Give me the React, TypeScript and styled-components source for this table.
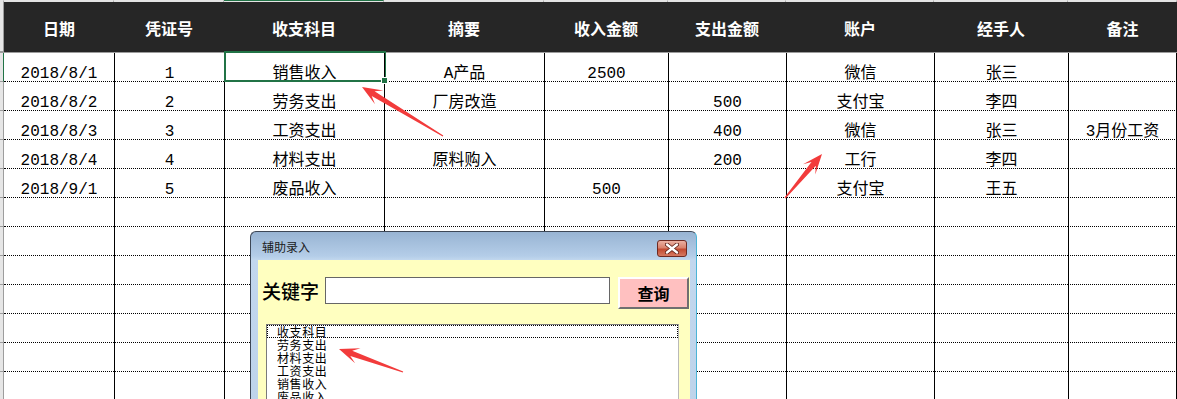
import styled, { createGlobalStyle, css } from "styled-components";

const GlobalStyle = createGlobalStyle`
  body {
    margin: 0;
    background: #ffffff;
    overflow: hidden;
  }
`;

const COLS = [110, 110, 160, 160, 124, 118, 148, 134, 109];
const TEMPLATE = `4px ${COLS.map((w) => `${w}px`).join(" ")}`;
const SELECTED_COL = 2;
const SELECTED_ROW = 0;

const HEADERS = ["日期", "凭证号", "收支科目", "摘要", "收入金额", "支出金额", "账户", "经手人", "备注"];

const ROWS: string[][] = [
  ["2018/8/1", "1", "销售收入", "A产品", "2500", "", "微信", "张三", ""],
  ["2018/8/2", "2", "劳务支出", "厂房改造", "", "500", "支付宝", "李四", ""],
  ["2018/8/3", "3", "工资支出", "", "", "400", "微信", "张三", "3月份工资"],
  ["2018/8/4", "4", "材料支出", "原料购入", "", "200", "工行", "李四", ""],
  ["2018/9/1", "5", "废品收入", "", "500", "", "支付宝", "王五", ""],
  ...Array.from({ length: 7 }, () => Array(9).fill("")),
];

const LIST_ITEMS = ["收支科目", "劳务支出", "材料支出", "工资支出", "销售收入", "废品收入"];

const Page = styled.div`
  position: relative;
  width: 1177px;
  height: 399px;
  overflow: hidden;
  font-family: "Liberation Mono", "Noto Sans CJK SC", monospace;
`;

const Sheet = styled.div`
  display: flex;
  flex-direction: column;
`;

const StripRow = styled.div`
  display: grid;
  grid-template-columns: ${TEMPLATE};
  height: 2px;
`;

const StripCell = styled.div<{ $active?: boolean }>`
  background: #e3e3e3;
  border-right: 1px solid #ababab;
  border-top: 1px solid ${(p) => (p.$active ? "#217346" : "#e3e3e3")};
  box-sizing: border-box;
`;

const HeaderRow = styled.div`
  display: grid;
  grid-template-columns: ${TEMPLATE};
  height: 51px;
  box-sizing: border-box;
  border-bottom: 1px solid #9c9c9c;
`;

const HeadCell = styled.div`
  background: #262626;
  color: #ffffff;
  font-family: "Noto Sans CJK SC", sans-serif;
  font-weight: 700;
  font-size: 16px;
  display: flex;
  align-items: center;
  justify-content: center;
  padding-top: 2px;
`;

const RowHead = styled.div<{ $active?: boolean }>`
  background: #e6e6e6;
  box-sizing: border-box;
  border-right: 1px solid ${(p) => (p.$active ? "#217346" : "#9d9d9d")};
  border-bottom: 1px solid #9d9d9d;
`;

const DataRow = styled.div`
  display: grid;
  grid-template-columns: ${TEMPLATE};
  height: 29px;
`;

const selectedFrame = css`
  &::after {
    content: "";
    position: absolute;
    left: -1px;
    top: -2px;
    right: -2px;
    bottom: -1px;
    border: 2px solid #217346;
    pointer-events: none;
  }
  &::before {
    content: "";
    position: absolute;
    right: -4px;
    bottom: -3px;
    width: 5px;
    height: 5px;
    background: #217346;
    border: 1px solid #ffffff;
    z-index: 2;
  }
`;

const Cell = styled.div<{ $first?: boolean; $last?: boolean; $selected?: boolean }>`
  position: relative;
  box-sizing: border-box;
  border-bottom: 1px dotted #000000;
  border-left: ${(p) => (p.$first ? "none" : "1px solid #000000")};
  border-right: ${(p) => (p.$last ? "1px solid #000000" : "none")};
  display: flex;
  align-items: flex-end;
  justify-content: center;
  font-size: 16px;
  line-height: 14px;
  color: #000000;
  white-space: nowrap;
  ${(p) => p.$selected && selectedFrame}
`;

const Window = styled.div`
  position: absolute;
  left: 250px;
  top: 231px;
  width: 447px;
  height: 190px;
  box-sizing: border-box;
  display: flex;
  flex-direction: column;
  padding: 0 6px 0 7px;
  border: 1px solid #3d4756;
  border-right-color: #4cb4d6;
  border-bottom: none;
  border-radius: 6px 6px 0 0;
  background: linear-gradient(#98b4d3 0px, #b4cde8 24px, #c2d7ee 28px, #bdd3ea 100%);
  z-index: 5;
`;

const TitleBar = styled.div`
  height: 28px;
  display: flex;
  align-items: flex-start;
  justify-content: space-between;
  padding: 0 3px 0 4px;
`;

const Title = styled.span`
  font-family: "Noto Sans CJK SC", sans-serif;
  font-size: 12px;
  line-height: 12px;
  margin-top: 9px;
  color: #1b1b1b;
`;

const CloseButton = styled.div`
  width: 30px;
  height: 17px;
  margin-top: 8px;
  box-sizing: border-box;
  border: 1px solid #6e2a22;
  border-radius: 3px;
  background: linear-gradient(#eab0a2 0%, #d9826d 45%, #c24a31 55%, #d67a62 100%);
  display: flex;
  align-items: center;
  justify-content: center;
`;

const Client = styled.div`
  flex: 1;
  background: #ffffc0;
  padding: 17px 0 0 4px;
  display: flex;
  flex-direction: column;
`;

const SearchRow = styled.div`
  display: flex;
  align-items: flex-start;
`;

const KeyLabel = styled.span`
  font-family: "Noto Sans CJK SC", sans-serif;
  font-size: 19px;
  font-weight: 500;
  line-height: 27px;
  width: 59px;
  margin-right: 4px;
  color: #000000;
  white-space: nowrap;
`;

const KeywordInput = styled.input`
  width: 285px;
  height: 27px;
  box-sizing: border-box;
  border: 1px solid #666666;
  background: #ffffff;
  padding: 0 4px;
  margin: 0 8px 0 0;
  outline: none;
`;

const QueryButton = styled.button`
  width: 71px;
  height: 32px;
  box-sizing: border-box;
  background: #ffc0c0;
  border: 2px solid;
  border-color: #ffffff #6f6f6f #6f6f6f #ffffff;
  font-family: "Noto Sans CJK SC", sans-serif;
  font-weight: 700;
  font-size: 16px;
  color: #000000;
  padding: 0;
`;

const ListBox = styled.div`
  margin: 15px 0 0 4px;
  width: 413px;
  flex: 1;
  box-sizing: border-box;
  background: #ffffff;
  border: 1px solid #7a7a7a;
  border-right-color: #b9b9b9;
`;

const ListItem = styled.div<{ $focused?: boolean }>`
  height: 13px;
  box-sizing: border-box;
  padding-left: 10px;
  font-family: "Noto Sans CJK SC", sans-serif;
  font-size: 12px;
  letter-spacing: 0.6px;
  line-height: 13px;
  color: #000000;
  outline: ${(p) => (p.$focused ? "1px dotted #000000" : "none")};
  outline-offset: -1px;
`;

const Overlay = styled.svg`
  position: absolute;
  left: 0;
  top: 0;
  pointer-events: none;
  z-index: 10;
`;

type Pt = [number, number];

const arrowPoints = (tail: Pt, tip: Pt) => {
  const dx = tip[0] - tail[0];
  const dy = tip[1] - tail[1];
  const len = Math.hypot(dx, dy);
  const ux = dx / len;
  const uy = dy / len;
  const nx = -uy;
  const ny = ux;
  const at = (back: number, side: number): string =>
    `${(tip[0] - ux * back + nx * side).toFixed(1)},${(tip[1] - uy * back + ny * side).toFixed(1)}`;
  return [
    at(len, 0.6),
    at(13, 2.8),
    at(20, 8),
    at(0, 0),
    at(20, -8),
    at(13, -2.8),
    at(len, -0.6),
  ].join(" ");
};

const ARROWS: [Pt, Pt][] = [
  [[443, 136], [362, 87]],
  [[785, 198], [822, 154]],
  [[403, 372], [339, 349]],
];

const CloseIcon = () => (
  <svg width="14" height="11" viewBox="0 0 14 11">
    <path
      d="M2 1.5 L12 9.5 M12 1.5 L2 9.5"
      stroke="#5a1d14"
      strokeWidth="4"
      strokeLinecap="round"
    />
    <path
      d="M2 1.5 L12 9.5 M12 1.5 L2 9.5"
      stroke="#ffffff"
      strokeWidth="2.4"
      strokeLinecap="round"
    />
  </svg>
);

export default function App() {
  return (
    <Page>
      <GlobalStyle />
      <Sheet>
        <StripRow>
          <StripCell />
          {HEADERS.map((h, i) => (
            <StripCell key={h} $active={i === SELECTED_COL} />
          ))}
        </StripRow>
        <HeaderRow>
          <RowHead />
          {HEADERS.map((h) => (
            <HeadCell key={h}>{h}</HeadCell>
          ))}
        </HeaderRow>
        {ROWS.map((row, r) => (
          <DataRow key={r}>
            <RowHead $active={r === SELECTED_ROW} />
            {row.map((value, c) => (
              <Cell
                key={c}
                $first={c === 0}
                $last={c === row.length - 1}
                $selected={r === SELECTED_ROW && c === SELECTED_COL}
              >
                {value}
              </Cell>
            ))}
          </DataRow>
        ))}
      </Sheet>

      <Window>
        <TitleBar>
          <Title>辅助录入</Title>
          <CloseButton>
            <CloseIcon />
          </CloseButton>
        </TitleBar>
        <Client>
          <SearchRow>
            <KeyLabel>关键字</KeyLabel>
            <KeywordInput readOnly value="" />
            <QueryButton>查询</QueryButton>
          </SearchRow>
          <ListBox>
            {LIST_ITEMS.map((item, i) => (
              <ListItem key={item} $focused={i === 0}>
                {item}
              </ListItem>
            ))}
          </ListBox>
        </Client>
      </Window>

      <Overlay width="1177" height="399" viewBox="0 0 1177 399">
        {ARROWS.map(([tail, tip], i) => (
          <polygon key={i} points={arrowPoints(tail, tip)} fill="#f23b3b" />
        ))}
      </Overlay>
    </Page>
  );
}
